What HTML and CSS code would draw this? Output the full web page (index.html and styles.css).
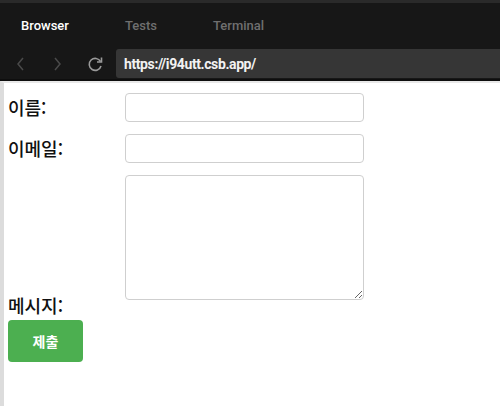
FILE: index.html
```html
<!DOCTYPE html>
<html lang="ko">
<head>
    <meta charset="UTF-8">
    <title>Browser - i94utt.csb.app</title>
    <link rel="stylesheet" href="styles.css">
</head>
<body>
    <div class="tabs">
        <span class="tab active">Browser</span>
        <span class="tab">Tests</span>
        <span class="tab">Terminal</span>
    </div>
    <div class="navbar">
        <span class="nav-btn">
            <svg width="12" height="16" viewBox="0 0 12 16"><path d="M8 2 L3 8 L8 14" fill="none" stroke="#4a4a4a" stroke-width="1.5"/></svg>
        </span>
        <span class="nav-btn">
            <svg width="12" height="16" viewBox="0 0 12 16"><path d="M4 2 L9 8 L4 14" fill="none" stroke="#4a4a4a" stroke-width="1.5"/></svg>
        </span>
        <span class="nav-btn">
            <svg width="18" height="18" viewBox="0 0 18 18"><path d="M14.5 6.5 A6 6 0 1 0 15 11" fill="none" stroke="#9a9a9a" stroke-width="1.6"/><path d="M15.5 2.5 L15.5 7 L11 7" fill="none" stroke="#9a9a9a" stroke-width="1.6"/></svg>
        </span>
        <div class="url">https://i94utt.csb.app/</div>
    </div>
    <div class="frame">
        <form class="contact">
            <div class="row">
                <label for="name">이름:</label>
                <input type="text" id="name">
            </div>
            <div class="row">
                <label for="email">이메일:</label>
                <input type="email" id="email">
            </div>
            <div class="row row-message">
                <label for="message">메시지:</label>
                <textarea id="message"></textarea>
            </div>
            <button type="submit" class="submit">제출</button>
        </form>
    </div>
</body>
</html>
```

FILE: styles.css
```css
html, body {
    margin: 0;
    height: 100%;
}
body {
    font-family: Roboto, "Noto Sans", "Noto Sans CJK KR", sans-serif;
    background: #fff;
    display: flex;
    flex-direction: column;
}
.tabs {
    background: #171717;
    border-top: 3px solid #2a2a2a;
    height: 44px;
    display: flex;
    align-items: center;
    padding-left: 21px;
}
.tab {
    font-size: 13px;
    font-weight: 500;
    color: #6f6f6f;
    width: 104px;
}
.tab:nth-child(2) {
    width: 88px;
}
.tab.active {
    color: #fff;
}
.navbar {
    background: #171717;
    height: 31px;
    display: flex;
    align-items: center;
    padding: 1px 0 0 15px;
    border-bottom: 2px solid #0e0e0e;
}
.nav-btn {
    width: 36px;
    display: flex;
    align-items: center;
}
.nav-btn:nth-child(3) {
    width: 30px;
    margin-left: -1px;
}
.url {
    flex: 1;
    height: 29px;
    background: #363636;
    border-radius: 3px 0 0 3px;
    color: #f2f2f2;
    font-size: 14px;
    font-weight: 700;
    letter-spacing: -0.4px;
    display: flex;
    align-items: center;
    padding-left: 8px;
}
.frame {
    flex: 1;
    border-top: 2px solid #e8e8e8;
    border-left: 4px solid #dcdcdc;
}
.contact {
    padding: 10px 0 0 4px;
}
.row {
    display: flex;
    align-items: center;
    margin-bottom: 12px;
}
.row label {
    width: 117px;
    font-family: "Noto Sans CJK KR", sans-serif;
    font-size: 18px;
    font-weight: 500;
    color: #111;
    line-height: 21px;
}
.row input,
.row textarea {
    box-sizing: border-box;
    width: 239px;
    border: 1px solid #cfcfcf;
    border-radius: 4px;
    font-size: 14px;
    margin: 0;
}
.row input {
    height: 29px;
}
.row-message {
    align-items: flex-end;
    margin-bottom: 4px;
}
.row-message textarea {
    height: 125px;
    margin-bottom: 16px;
    resize: both;
}
.submit {
    width: 75px;
    height: 42px;
    background: #4caf50;
    color: #fff;
    border: none;
    border-radius: 4px;
    font-family: "Noto Sans CJK KR", sans-serif;
    font-size: 14px;
    font-weight: 700;
}
```
